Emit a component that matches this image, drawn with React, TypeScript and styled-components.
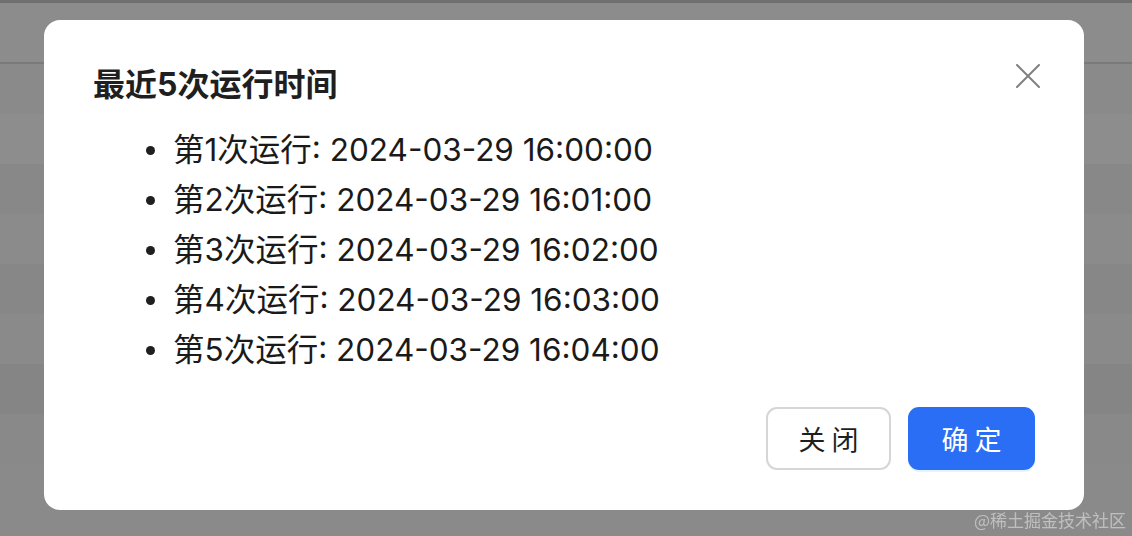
import React from "react";
import styled, { createGlobalStyle } from "styled-components";

const GlobalStyle = createGlobalStyle`
  html, body {
    margin: 0;
    padding: 0;
    height: 100%;
    background: #8a8a8a;
    font-family: Inter, "Noto Sans CJK SC", sans-serif;
    overflow: hidden;
  }
`;

const Backdrop = styled.div`
  display: flex;
  flex-direction: column;
  height: 100vh;
  border-top: 3px solid #6f6f6f;
`;

const BackHeader = styled.div`
  height: 59px;
  border-bottom: 2px solid #7a7a7a;
  background: #8c8c8c;
`;

const BackRow = styled.div<{ $shade: string }>`
  height: 50px;
  background: ${(p) => p.$shade};
`;

const Overlay = styled.div`
  position: fixed;
  inset: 0;
  display: flex;
  justify-content: flex-start;
  align-items: flex-start;
  padding: 20px 0 0 44px;
`;

const Modal = styled.div`
  width: 1040px;
  height: 490px;
  box-sizing: border-box;
  background: #fff;
  border-radius: 16px;
  padding: 45px 49px 40px 49px;
  display: flex;
  flex-direction: column;
  position: relative;
`;

const Title = styled.h2`
  margin: 0;
  font-size: 32px;
  line-height: 40px;
  font-weight: 700;
  color: #1f1f1f;
`;

const List = styled.ul`
  margin: 20px 0 0 0;
  padding: 0 0 0 53px;
  list-style: none;
  color: #1a1a1a;
  font-size: 31.5px;
  line-height: 50px;
`;

const Item = styled.li`
  display: flex;
  align-items: center;
  gap: 18px;
  &::before {
    content: "";
    width: 9px;
    height: 9px;
    border-radius: 50%;
    background: #1f1f1f;
    flex-shrink: 0;
  }
`;

const Footer = styled.div`
  margin-top: auto;
  display: flex;
  justify-content: flex-end;
  gap: 17px;
`;

const Button = styled.button<{ $primary?: boolean }>`
  width: ${(p) => (p.$primary ? "127px" : "125px")};
  height: 63px;
  box-sizing: border-box;
  border-radius: 11px;
  font-family: inherit;
  font-size: 27px;
  letter-spacing: 6px;
  text-indent: 6px;
  cursor: pointer;
  border: 2px solid ${(p) => (p.$primary ? "#2a6ef5" : "#d6d6d6")};
  background: ${(p) => (p.$primary ? "#2a6ef5" : "#fff")};
  color: ${(p) => (p.$primary ? "#fff" : "#1f1f1f")};
  box-shadow: ${(p) => (p.$primary ? "0 2px 0 rgba(5,145,255,0.1)" : "none")};
`;

const Close = styled.button`
  position: absolute;
  top: 44px;
  right: 44px;
  width: 24px;
  height: 24px;
  padding: 0;
  border: none;
  background: transparent;
  cursor: pointer;
  display: flex;
`;

const Watermark = styled.div`
  position: fixed;
  right: 6px;
  bottom: 4px;
  font-family: "Noto Sans CJK SC", sans-serif;
  font-size: 17px;
  color: rgba(235, 235, 235, 0.55);
`;

const runs = [
  "2024-03-29 16:00:00",
  "2024-03-29 16:01:00",
  "2024-03-29 16:02:00",
  "2024-03-29 16:03:00",
  "2024-03-29 16:04:00",
];

const shades = ["#8a8a8a", "#8d8d8d", "#888888", "#8b8b8b", "#878787", "#8a8a8a", "#858585", "#898989", "#8a8a8a"];

export default function App() {
  return (
    <>
      <GlobalStyle />
      <Backdrop>
        <BackHeader />
        {shades.map((s, i) => (
          <BackRow key={i} $shade={s} />
        ))}
      </Backdrop>
      <Overlay>
        <Modal>
          <Close aria-label="close">
            <svg width="24" height="24" viewBox="0 0 24 24">
              <path d="M1 1L23 23M23 1L1 23" stroke="#808080" strokeWidth="2" strokeLinecap="round" />
            </svg>
          </Close>
          <Title>最近5次运行时间</Title>
          <List>
            {runs.map((t, i) => (
              <Item key={t}>
                第{i + 1}次运行: {t}
              </Item>
            ))}
          </List>
          <Footer>
            <Button>关闭</Button>
            <Button $primary>确定</Button>
          </Footer>
        </Modal>
      </Overlay>
      <Watermark>@稀土掘金技术社区</Watermark>
    </>
  );
}
